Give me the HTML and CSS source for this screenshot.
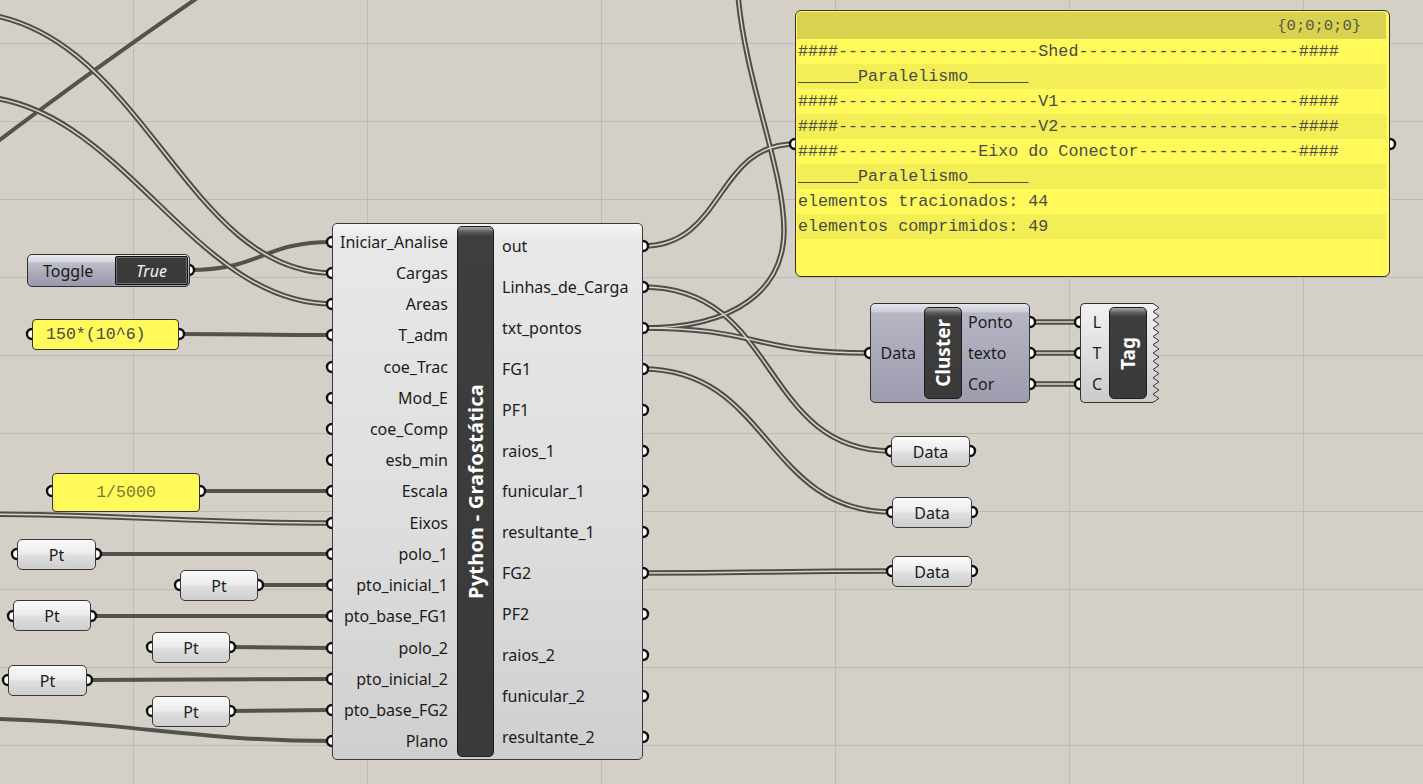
FILE: index.html
```html
<!DOCTYPE html>
<html lang="pt">
<head>
<meta charset="utf-8">
<title>Grasshopper - Grafostática</title>
<link rel="stylesheet" href="styles.css">
</head>
<body>
<svg class="wires" width="1423" height="784" viewBox="0 0 1423 784">
  <g class="single">
    <path d="M -30,162 C 40,110 120,50 215,-14"/>
    <path d="M 189,270 C 262,270 262,242 332,242"/>
    <path d="M 179,334 C 256,334 256,335 332,335"/>
    <path d="M 200,491 L 332,491"/>
    <path d="M 96,554 L 332,554"/>
    <path d="M 258,585 L 332,585"/>
    <path d="M 91,616 L 332,616"/>
    <path d="M 230,647 L 332,648"/>
    <path d="M 87,680 L 332,679"/>
    <path d="M 230,711 L 332,710"/>
    <path d="M -60,718 C 120,718 180,741 332,741"/>
  </g>
  <g class="dbl-o">
    <path d="M -40,12 C 140,12 180,273 332,273"/>
    <path d="M -30,96 C 120,96 190,304 332,304"/>
    <path d="M -50,514 C 140,514 180,523 332,523"/>
    <path d="M 643,246 C 725,246 715,144 795,144"/>
    <path d="M 643,328 C 735,328 784,290 784,230 C 784,170 745,80 738,-5"/>
    <path d="M 643,328 C 760,328 750,353 870,353"/>
    <path d="M 643,287 C 780,287 760,451 891,451"/>
    <path d="M 643,369 C 770,369 765,512 892,512"/>
    <path d="M 643,573 C 770,573 770,571 892,571"/>
    <path d="M 1030,322 L 1080,322"/>
    <path d="M 1030,353 L 1080,353"/>
    <path d="M 1030,384 L 1080,384"/>
  </g>
  <g class="dbl-i">
    <path d="M -40,12 C 140,12 180,273 332,273"/>
    <path d="M -30,96 C 120,96 190,304 332,304"/>
    <path d="M -50,514 C 140,514 180,523 332,523"/>
    <path d="M 643,246 C 725,246 715,144 795,144"/>
    <path d="M 643,328 C 735,328 784,290 784,230 C 784,170 745,80 738,-5"/>
    <path d="M 643,328 C 760,328 750,353 870,353"/>
    <path d="M 643,287 C 780,287 760,451 891,451"/>
    <path d="M 643,369 C 770,369 765,512 892,512"/>
    <path d="M 643,573 C 770,573 770,571 892,571"/>
    <path d="M 1030,322 L 1080,322"/>
    <path d="M 1030,353 L 1080,353"/>
    <path d="M 1030,384 L 1080,384"/>
  </g>
  <g class="grips">
    <circle cx="332" cy="242" r="5"/><circle cx="332" cy="273" r="5"/><circle cx="332" cy="304" r="5"/>
    <circle cx="332" cy="335" r="5"/><circle cx="332" cy="367" r="5"/><circle cx="332" cy="398" r="5"/>
    <circle cx="332" cy="429" r="5"/><circle cx="332" cy="460" r="5"/><circle cx="332" cy="491" r="5"/>
    <circle cx="332" cy="523" r="5"/><circle cx="332" cy="554" r="5"/><circle cx="332" cy="585" r="5"/>
    <circle cx="332" cy="616" r="5"/><circle cx="332" cy="648" r="5"/><circle cx="332" cy="679" r="5"/>
    <circle cx="332" cy="710" r="5"/><circle cx="332" cy="741" r="5"/>
    <circle cx="643" cy="246" r="5"/><circle cx="643" cy="287" r="5"/><circle cx="643" cy="328" r="5"/>
    <circle cx="643" cy="369" r="5"/><circle cx="643" cy="410" r="5"/><circle cx="643" cy="451" r="5"/>
    <circle cx="643" cy="491" r="5"/><circle cx="643" cy="532" r="5"/><circle cx="643" cy="573" r="5"/>
    <circle cx="643" cy="614" r="5"/><circle cx="643" cy="655" r="5"/><circle cx="643" cy="696" r="5"/>
    <circle cx="643" cy="737" r="5"/>
    <circle cx="189" cy="270" r="5"/>
    <circle cx="32" cy="334" r="5"/><circle cx="179" cy="334" r="5"/>
    <circle cx="52" cy="491" r="5"/><circle cx="200" cy="491" r="5"/>
    <circle cx="17" cy="554" r="5"/><circle cx="96" cy="554" r="5"/>
    <circle cx="180" cy="585" r="5"/><circle cx="258" cy="585" r="5"/>
    <circle cx="13" cy="616" r="5"/><circle cx="91" cy="616" r="5"/>
    <circle cx="152" cy="647" r="5"/><circle cx="230" cy="647" r="5"/>
    <circle cx="8" cy="680" r="5"/><circle cx="87" cy="680" r="5"/>
    <circle cx="152" cy="711" r="5"/><circle cx="230" cy="711" r="5"/>
    <circle cx="795" cy="144" r="5"/><circle cx="1390" cy="144" r="5"/>
    <circle cx="870" cy="353" r="5"/>
    <circle cx="1030" cy="322" r="5"/><circle cx="1030" cy="353" r="5"/><circle cx="1030" cy="384" r="5"/>
    <circle cx="1080" cy="322" r="5"/><circle cx="1080" cy="353" r="5"/><circle cx="1080" cy="384" r="5"/>
    <circle cx="891" cy="451" r="5"/><circle cx="970" cy="451" r="5"/>
    <circle cx="892" cy="512" r="5"/><circle cx="972" cy="512" r="5"/>
    <circle cx="892" cy="571" r="5"/><circle cx="972" cy="571" r="5"/>
  </g>
</svg>

<div class="node toggle"><span class="tg-label">Toggle</span><span class="tg-val">True</span></div>

<div class="node ypanel p-150">150*(10^6)</div>
<div class="node ypanel p-scale">1/5000</div>

<div class="node param pt1">Pt</div>
<div class="node param pt2">Pt</div>
<div class="node param pt3">Pt</div>
<div class="node param pt4">Pt</div>
<div class="node param pt5">Pt</div>
<div class="node param pt6">Pt</div>

<div class="node py">
  <div class="py-in">
    <span>Iniciar_Analise</span><span>Cargas</span><span>Areas</span><span>T_adm</span>
    <span>coe_Trac</span><span>Mod_E</span><span>coe_Comp</span><span>esb_min</span>
    <span>Escala</span><span>Eixos</span><span>polo_1</span><span>pto_inicial_1</span>
    <span>pto_base_FG1</span><span>polo_2</span><span>pto_inicial_2</span><span>pto_base_FG2</span>
    <span>Plano</span>
  </div>
  <div class="bar"><span>Python - Grafostática</span></div>
  <div class="py-out">
    <span>out</span><span>Linhas_de_Carga</span><span>txt_pontos</span><span>FG1</span>
    <span>PF1</span><span>raios_1</span><span>funicular_1</span><span>resultante_1</span>
    <span>FG2</span><span>PF2</span><span>raios_2</span><span>funicular_2</span>
    <span>resultante_2</span>
  </div>
</div>

<div class="node panel">
  <div class="panel-head">{0;0;0;0}</div>
  <div class="row odd">####--------------------Shed----------------------####</div>
  <div class="row even">______Paralelismo______</div>
  <div class="row odd">####--------------------V1------------------------####</div>
  <div class="row even">####--------------------V2------------------------####</div>
  <div class="row odd">####--------------Eixo do Conector----------------####</div>
  <div class="row even">______Paralelismo______</div>
  <div class="row odd">elementos tracionados: 44</div>
  <div class="row even">elementos comprimidos: 49</div>
</div>

<div class="node cluster">
  <div class="cl-in"><span>Data</span></div>
  <div class="bar"><span>Cluster</span></div>
  <div class="cl-out"><span>Ponto</span><span>texto</span><span>Cor</span></div>
</div>

<div class="node tag">
  <div class="tag-body">
    <div class="tag-in"><span>L</span><span>T</span><span>C</span></div>
    <div class="bar"><span>Tag</span></div>
  </div>
  <svg class="zig" width="10" height="100" viewBox="0 0 10 100">
    <defs>
      <linearGradient id="tagfill" x1="0" y1="0" x2="0" y2="1">
        <stop offset="0" stop-color="#f2f2f2"/>
        <stop offset="0.5" stop-color="#dedede"/>
        <stop offset="1" stop-color="#cbcbcb"/>
      </linearGradient>
    </defs>
    <polygon fill="url(#tagfill)" points="0,0.5 3,0.5 9,4.6 3,8.75 9,12.9 3,17 9,21.1 3,25.25 9,29.4 3,33.5 9,37.6 3,41.75 9,45.9 3,50 9,54.1 3,58.25 9,62.4 3,66.5 9,70.6 3,74.75 9,78.9 3,83 9,87.1 3,91.25 9,95.4 3,99.5 0,99.5"/>
    <polyline fill="none" stroke="#333" stroke-width="1" points="0,0.5 3,0.5 9,4.6 3,8.75 9,12.9 3,17 9,21.1 3,25.25 9,29.4 3,33.5 9,37.6 3,41.75 9,45.9 3,50 9,54.1 3,58.25 9,62.4 3,66.5 9,70.6 3,74.75 9,78.9 3,83 9,87.1 3,91.25 9,95.4 3,99.5 0,99.5"/>
  </svg>
</div>

<div class="node param d1">Data</div>
<div class="node param d2">Data</div>
<div class="node param d3">Data</div>
</body>
</html>
```

FILE: styles.css
```css
html, body {
  margin: 0;
  padding: 0;
}

body {
  width: 1423px;
  height: 784px;
  overflow: hidden;
  position: relative;
  background-color: #d4d0c8;
  background-image:
    linear-gradient(to right, #bfbbb3 1px, transparent 1px),
    linear-gradient(to bottom, #bfbbb3 1px, transparent 1px);
  background-size: 234px 100%, 100% 78px;
  background-position: 133px 0, 0 43px;
  font-family: "Noto Sans", "Open Sans", sans-serif;
  font-size: 16px;
  color: #1c1c1c;
}

/* ---------- wires layer ---------- */
.wires {
  position: absolute;
  left: 0;
  top: 0;
}
.wires path {
  fill: none;
}
.single path {
  stroke: #53524d;
  stroke-width: 4;
}
.dbl-o path {
  stroke: #4f4e4a;
  stroke-width: 5.5;
}
.dbl-i path {
  stroke: #d9d6cf;
  stroke-width: 1.5;
}
.grips circle {
  fill: #ffffff;
  stroke: #0e0e0e;
  stroke-width: 2.4;
}

/* ---------- generic node ---------- */
.node {
  position: absolute;
  box-sizing: border-box;
}

/* dark vertical name bar */
.bar {
  box-sizing: border-box;
  background: linear-gradient(#a9a9a9 0, #5a5a5a 5px, #3e3e3e 9px, #3a3a3a 100%);
  border: 1px solid #1c1c1c;
  border-radius: 5px;
  display: flex;
  align-items: center;
  justify-content: center;
  overflow: hidden;
}
.bar span {
  writing-mode: vertical-rl;
  transform: rotate(180deg);
  color: #ffffff;
  font-weight: 700;
  font-size: 19px;
  line-height: 1;
  white-space: nowrap;
}
.py .bar span {
  font-size: 20px;
  letter-spacing: 0.2px;
}

/* ---------- toggle ---------- */
.toggle {
  left: 27px;
  top: 254px;
  width: 163px;
  height: 33px;
  border: 1px solid #2e2e2e;
  border-radius: 5px;
  background: linear-gradient(#ececf2 0, #d4d4de 7px, #bdbdca 8px, #a9a9b9 60%, #9a9aac 100%);
  display: flex;
  align-items: center;
  padding: 1px 1px 1px 15px;
}
.tg-label {
  flex: 1;
  font-size: 16px;
  color: #1a1a1a;
}
.tg-val {
  width: 73px;
  height: 29px;
  box-sizing: border-box;
  background: #3a3a3a;
  border: 1px solid #111;
  box-shadow: inset 0 0 0 1px #707070;
  border-radius: 2px;
  color: #f4f4f4;
  font-style: italic;
  display: flex;
  align-items: center;
  justify-content: center;
}

/* ---------- yellow value panels ---------- */
.ypanel {
  background: #fffa5a;
  border: 1px solid #333;
  border-radius: 4px;
  font-family: "Liberation Mono", "DejaVu Sans Mono", monospace;
  font-size: 16.6px;
  color: #4a4a48;
  display: flex;
  align-items: center;
  white-space: pre;
}
.p-150 {
  left: 32px;
  top: 319px;
  width: 147px;
  height: 31px;
  padding-left: 13px;
}
.p-scale {
  left: 52px;
  top: 473px;
  width: 148px;
  height: 39px;
  justify-content: center;
  color: #7b7b2c;
}

/* ---------- small params (Pt / Data) ---------- */
.param {
  width: 79px;
  height: 31px;
  border: 1px solid #383838;
  border-radius: 5px;
  background: linear-gradient(#fbfbfb 0%, #ececec 45%, #dedede 55%, #cecece 100%);
  display: flex;
  align-items: center;
  justify-content: center;
  font-size: 16px;
  color: #202020;
}
.pt1 { left: 17px;  top: 539px; }
.pt2 { left: 180px; top: 570px; width: 78px; }
.pt3 { left: 13px;  top: 600px; width: 78px; }
.pt4 { left: 152px; top: 632px; width: 78px; }
.pt5 { left: 8px;   top: 665px; }
.pt6 { left: 152px; top: 696px; width: 78px; }
.d1 { left: 891px; top: 436px; width: 79px; }
.d2 { left: 892px; top: 497px; width: 80px; }
.d3 { left: 892px; top: 556px; width: 80px; }

/* ---------- python component ---------- */
.py {
  left: 332px;
  top: 223px;
  width: 311px;
  height: 537px;
  border: 1px solid #3a3a3a;
  border-radius: 5px;
  background: linear-gradient(#f6f6f6 0, #e8e8e8 3%, #dedede 55%, #cfcfcf 100%);
  display: grid;
  grid-template-columns: 124px 37px 1fr;
  padding: 2px 0;
}
.py-in, .py-out {
  display: flex;
  flex-direction: column;
}
.py-in span, .py-out span {
  flex: 1;
  display: flex;
  align-items: center;
  white-space: nowrap;
}
.py-in span {
  justify-content: flex-end;
  padding-right: 9px;
}
.py-out span {
  padding-left: 8px;
}

/* ---------- text panel ---------- */
.panel {
  left: 795px;
  top: 10px;
  width: 595px;
  height: 267px;
  border: 1px solid #333;
  border-radius: 6px;
  background: #fffa5a;
  padding: 1px 3px 0 1px;
  font-family: "Liberation Mono", "DejaVu Sans Mono", monospace;
  font-size: 16.7px;
  color: #4a4a48;
}
.panel-head {
  height: 27px;
  background: #d8d24f;
  border-radius: 4px 4px 0 0;
  display: flex;
  align-items: center;
  justify-content: flex-end;
  padding-right: 25px;
  font-size: 15.5px;
  color: #55554a;
}
.row {
  height: 25px;
  display: flex;
  align-items: center;
  padding-left: 1px;
  white-space: pre;
}
.row.odd { background: #fffa5a; }
.row.even { background: #f3ee55; }

/* ---------- cluster ---------- */
.cluster {
  left: 870px;
  top: 303px;
  width: 160px;
  height: 100px;
  border: 1px solid #333;
  border-radius: 5px;
  background: linear-gradient(#e6e6ee 0, #cdcdd8 8px, #b6b6c5 9px, #a8a8b9 55%, #9d9daf 100%);
  display: grid;
  grid-template-columns: 53px 38px 1fr;
  padding: 3px 0;
}
.cl-in {
  display: flex;
  align-items: center;
  justify-content: flex-end;
  padding-right: 8px;
}
.cl-out {
  display: flex;
  flex-direction: column;
}
.cl-out span {
  flex: 1;
  display: flex;
  align-items: center;
  padding-left: 6px;
}

/* ---------- tag ---------- */
.tag {
  left: 1080px;
  top: 303px;
  width: 80px;
  height: 100px;
  display: flex;
}
.tag-body {
  width: 70px;
  height: 100px;
  box-sizing: border-box;
  border: 1px solid #333;
  border-right: none;
  border-radius: 5px 0 0 5px;
  background: linear-gradient(#f2f2f2 0%, #dedede 50%, #cbcbcb 100%);
  display: grid;
  grid-template-columns: 28px 38px;
  padding: 3px 0;
}
.tag-in {
  display: flex;
  flex-direction: column;
}
.tag-in span {
  flex: 1;
  display: flex;
  align-items: center;
  justify-content: center;
  padding-left: 4px;
}
.zig {
  display: block;
  flex: none;
}
```
